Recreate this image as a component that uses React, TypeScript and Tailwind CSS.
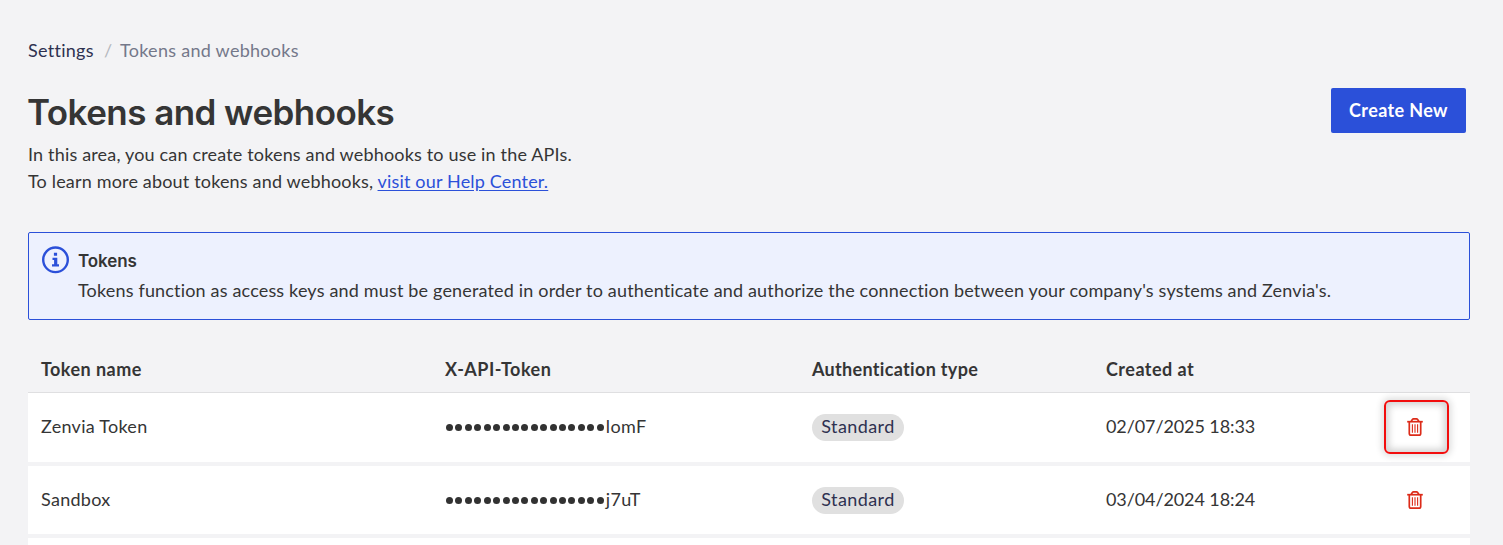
import React from 'react';

interface Token {
  name: string;
  suffix: string;
  type: string;
  createdAt: string;
  highlighted?: boolean;
}

const tokens: Token[] = [
  { name: 'Zenvia Token', suffix: 'lomF', type: 'Standard', createdAt: '02/07/2025 18:33', highlighted: true },
  { name: 'Sandbox', suffix: 'j7uT', type: 'Standard', createdAt: '03/04/2024 18:24' }
];

const columns = 'grid grid-cols-[404px_367px_294px_1fr_110px] pl-[13px]';

function InfoIcon() {
  return (
    <svg className="w-7 h-7 shrink-0" viewBox="0 0 28 28" fill="none">
      <circle cx="14.5" cy="13.8" r="12.3" stroke="#2b50d9" strokeWidth="2.4" />
      <path d="M12.9 6.8h3.2v3h-3.2zM11.5 11.8h4.8v6.5H18v2.2h-7v-2.2h2.1V14h-1.6z" fill="#2b50d9" />
    </svg>
  );
}

function TrashIcon() {
  return (
    <svg className="w-4 h-[18px]" viewBox="0 0 16 18" fill="none" stroke="#dc2b19">
      <path d="M0.2 3.7h15.6" strokeWidth="1.7" />
      <path d="M4.2 3.3 5.4 1.5Q5.8 .9 6.5 .9h3q.7 0 1.1.6l1.2 1.8" strokeWidth="1.7" />
      <path d="M2.3 4v11.4q0 1.7 1.8 1.7h7.8q1.8 0 1.8-1.7V4" strokeWidth="1.7" />
      <path d="M5.4 6.3v8.4M8 6.3v8.4M10.6 6.3v8.4" strokeWidth="1.1" />
    </svg>
  );
}

function TokenRow({ token }: { token: Token }) {
  return (
    <div className={`${columns} items-start bg-white pt-[21px] leading-[25px]`}>
      <span className="tracking-[0.27px]">{token.name}</span>
      <span className="flex items-center">
        <span className="flex gap-[2.43px] pl-px pr-[2px] pt-[2px]" aria-label="Hidden token">
          {Array.from({ length: 17 }, (_, i) => (
            <i key={i} className="size-[7px] rounded-full bg-[#323232]" />
          ))}
        </span>
        <span className="tracking-[0.4px]">{token.suffix}</span>
      </span>
      <span className="flex">
        <span className="h-[27px] w-[92px] rounded-full bg-[#e0e0e0] text-center tracking-[0.4px] text-[#2e3150]">
          {token.type}
        </span>
      </span>
      <span className="tracking-[-0.1px]">{token.createdAt}</span>
      <div className="-mt-[14px] flex justify-center pl-[2px]">
        <button
          aria-label="Delete"
          className={
            token.highlighted
              ? 'flex h-[54px] w-[65px] items-center justify-center rounded-md border-2 border-[#f20d0d] pr-[3px] shadow-[0_0_7px_2px_rgba(0,0,0,0.14),inset_0_0_7px_3px_rgba(0,0,0,0.18)]'
              : 'flex h-[54px] w-[65px] items-center justify-center pb-px pr-[3px]'
          }
        >
          <TrashIcon />
        </button>
      </div>
    </div>
  );
}

export default function App() {
  return (
    <div className="h-[545px] overflow-hidden bg-[#f3f3f5] pl-7 pr-[33px] pt-[37px] font-['Lato','Liberation_Sans',sans-serif] text-[18px] leading-[27px] text-[#353535]">
      <nav className="flex tracking-[0.28px]">
        <span className="w-[76px] text-[#2e3150]">Settings</span>
        <span className="w-4 text-[#b5b8be]">/</span>
        <span className="text-[#74788a]">Tokens and webhooks</span>
      </nav>

      <header className="mt-6 flex items-start justify-between pr-1">
        <div className="tracking-[0.17px]">
          <h1 className="-ml-px h-[53px] whitespace-nowrap font-['Inter',sans-serif] text-[35px] font-semibold leading-[49px] tracking-[-0.55px]">
            Tokens and webhooks
          </h1>
          <p>In this area, you can create tokens and webhooks to use in the APIs.</p>
          <p>
            To learn more about tokens and webhooks,{' '}
            <a href="#" className="text-[#2b50d9] underline underline-offset-2">
              visit our Help Center.
            </a>
          </p>
        </div>
        <button className="h-[45px] w-[135px] rounded-xs bg-[#2b50d9] font-bold tracking-[0.38px] text-white">
          Create New
        </button>
      </header>

      <section className="mt-[37px] flex h-[88px] rounded-xs border border-[#2b50d9] bg-[#edf1fe] pl-3 pt-[13px]">
        <InfoIcon />
        <div className="ml-[9px]">
          <h2 className="font-['Inter',sans-serif] text-[17px] font-semibold leading-[30px] tracking-[-0.1px]">Tokens</h2>
          <p className="leading-7 tracking-[0.17px]">
            Tokens function as access keys and must be generated in order to authenticate and authorize the connection
            between your company's systems and Zenvia's.
          </p>
        </div>
      </section>

      <section className="mt-[26px]">
        <div className={`${columns} h-[47px] items-center border-b border-[#dfdfe1] font-bold`}>
          <span className="tracking-[0.45px]">Token name</span>
          <span className="tracking-[0.5px]">X-API-Token</span>
          <span className="tracking-[0.32px]">Authentication type</span>
          <span className="tracking-[0.48px]">Created at</span>
        </div>
        <div className="grid grid-rows-[69px_68px_69px] gap-1">
          {tokens.map((token) => (
            <TokenRow key={token.name} token={token} />
          ))}
          <div className="bg-white" />
        </div>
      </section>
    </div>
  );
}
